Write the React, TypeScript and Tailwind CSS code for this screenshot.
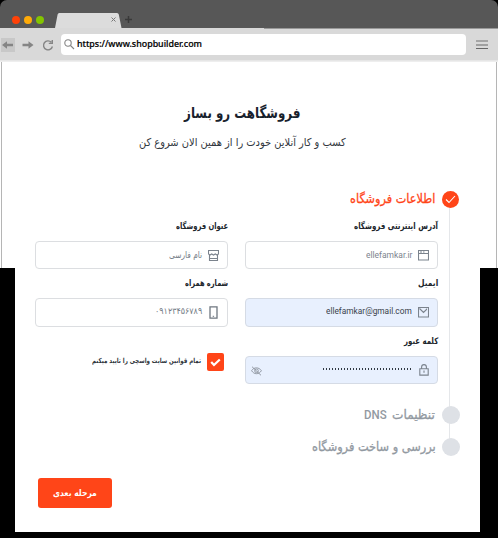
import { useLayoutEffect, useRef, useState, type ReactNode } from "react";

const fa = "font-['DejaVu_Sans',sans-serif]";
const en = "font-[Roboto,sans-serif]";

/* One line of text that is condensed or widened to a given measure. */
function Line({ width, ltr, className = "", children }: { width: number; ltr?: boolean; className?: string; children: string }) {
  const ref = useRef<HTMLSpanElement>(null);
  const [scale, setScale] = useState(1);
  useLayoutEffect(() => {
    if (ref.current) setScale(width / ref.current.offsetWidth);
  }, [width, children]);
  return (
    <span dir={ltr ? "ltr" : "rtl"} className={`block shrink-0 whitespace-nowrap ${className}`} style={{ width }}>
      <span
        ref={ref}
        className={`inline-block ${ltr ? "origin-left" : "origin-right"}`}
        style={{ transform: `scaleX(${scale})` }}
      >
        {children}
      </span>
    </span>
  );
}

function Field({ icon, filled, className = "", children }: { icon: ReactNode; filled?: boolean; className?: string; children: ReactNode }) {
  return (
    <div className={`flex w-[193px] items-center rounded-[4px] border pr-2 ${filled ? "border-[#d5dbe5] bg-[#e8f0fe]" : "border-[#dcdee1] bg-white"} ${className}`}>
      <span className="ml-[6px] flex w-[11px] shrink-0 justify-center">{icon}</span>
      {children}
    </div>
  );
}

const stroke = { fill: "none", stroke: "#7b838d", strokeWidth: 1.1 };

const WindowIcon = () => (
  <svg width="11" height="11" viewBox="0 0 11 11" {...stroke}>
    <path d="M.5.500h10v9.500H.5zM.5 3.500h10M2 2h2M5 2h1.500" />
  </svg>
);
const ShopIcon = () => (
  <svg width="11" height="11" viewBox="0 0 11 11" className="shrink-0" {...stroke}>
    <path d="M.5.500h10v3.500l-1.500 1-1.700-1-1.800 1-1.800-1L2 5 .5 4zM1.500 5v5.500h8V5M1.500 8.500h8" />
  </svg>
);
const MailIcon = () => (
  <svg width="11" height="11" viewBox="0 0 11 11" className="shrink-0" {...stroke}>
    <path d="M.5.500h10v9.500H.5zM1.500 1.500l4 4 4-4" />
  </svg>
);
const PhoneIcon = () => (
  <svg width="9" height="13" viewBox="0 0 9 13" fill="none" stroke="#6f7780">
    <path d="M1 .9h7v11.200H1z" strokeWidth="1.300" />
    <path d="M3.700 10.300h1.400" />
  </svg>
);
const LockIcon = () => (
  <svg width="10" height="12" viewBox="0 0 10 12" {...stroke}>
    <path d="M.8 4.800h8.400v6.300H.8zM2.600 4.700V3a2.400 2.400 0 0 1 4.800 0v1.700M5 6.600v2.200" />
  </svg>
);
const EyeOffIcon = () => (
  <svg width="11" height="10" viewBox="0 0 11 10" fill="none" stroke="#8b929c" strokeWidth=".9">
    <path d="M.6 4.700C2.800.9 8 .9 10.400 4.700 8 8.700 3 8.700.6 4.700z" />
    <circle cx="5.500" cy="4.800" r="1.800" />
    <path d="M1 .7l9 8.600" />
  </svg>
);

function BrowserBar() {
  return (
    <header className="relative h-[62px] shrink-0">
      <div className="flex h-7 items-end rounded-t-[7px] bg-[#575757]">
        <div className="mb-1 ml-3 flex gap-1">
          <i className="size-[8px] rounded-full bg-[#ff4208]" />
          <i className="size-[8px] rounded-full bg-[#ffab08]" />
          <i className="size-[8px] rounded-full bg-[#83c400]" />
        </div>
        <svg width="90" height="15" viewBox="0 0 90 15" className="ml-[11px]">
          <path d="M0 15 2.600 1.500Q2.800 0 4.300 0H62q1.500 0 1.800 1.500L66.500 15z" fill="#dcdcdc" />
          <path d="m56.500 4.500 4 4m0-4-4 4" stroke="#777" />
          <path d="M73.500 3v7M70 6.500h7" stroke="#393939" strokeWidth="1.500" />
        </svg>
      </div>
      <div className="flex h-8 items-center bg-[#d9d9d9]">
        <div className="mt-[2px] ml-px flex h-[14px] w-[14px] items-center justify-center bg-[#c8c8c8]">
          <svg width="12" height="8" viewBox="0 0 12 8"><path d="m0 4 5-3.800v2.600h6v2.400H5v2.600z" fill="#858585" /></svg>
        </div>
        <svg width="12" height="8" viewBox="0 0 12 8" className="mt-[2px] ml-[7px]"><path d="M11.500 4 6.500.2v2.600h-6v2.400h6v2.600z" fill="#858585" /></svg>
        <svg width="12" height="12" viewBox="0 0 12 12" className="mt-[3px] ml-2" fill="none" stroke="#858585" strokeWidth="1.400">
          <path d="M9.300 2.300A4.500 4.500 0 1 0 10.400 6.500M10.300 0v3.400H6.800" />
        </svg>
        <div className="ml-[7px] flex h-[21px] w-[405px] items-center rounded bg-white pl-[3px]">
          <svg width="11" height="11" viewBox="0 0 11 11" fill="none" stroke="#858585" strokeWidth="1.100">
            <circle cx="4" cy="4" r="3.200" /><path d="m6.500 6.500 3.500 3.500" />
          </svg>
          <Line ltr width={125} className="ml-[2px] font-['Noto_Sans',sans-serif] text-[9px] leading-4 font-medium text-black [-webkit-text-stroke:0.2px_black]">https://www.shopbuilder.com</Line>
        </div>
        <div className="ml-[10px] mt-px flex w-3 flex-col gap-[2px]">
          <i className="h-[2px] bg-[#a5a5a5]" /><i className="h-[2px] bg-[#a0a0a0]" /><i className="h-px bg-[#666]" />
        </div>
      </div>
      <div className="h-px bg-[#e6e6e6]" />
      <div className="h-px bg-[#eeeeee]" />
      <div className="absolute top-7 left-[264px] right-0 h-px bg-[#999]" />
    </header>
  );
}

const labelStyle = `${fa} h-[14px] text-[9px] leading-[14px] font-bold text-[#20252b]`;

export default function App() {
  return (
    <div className="relative flex h-[538px] w-[498px] flex-col overflow-hidden bg-black">
      <div className="absolute inset-x-0 top-[13px] h-[255px] bg-white" />
      <div className="absolute top-[62px] left-px h-[206px] w-[496px] border-x border-[#b5b5b5] bg-white" />
      <BrowserBar />
      <main dir="rtl" className="relative mr-[18px] ml-[15px] flex h-[470px] w-[465px] flex-col bg-white">
        <div className="mt-[40px] flex flex-col items-end">
          <Line width={116} className={`${fa} ml-[169px] h-[22px] text-[15px] leading-[22px] font-bold text-[#18212c]`}>فروشگاهت رو بساز</Line>
          <Line width={207} className={`${fa} mt-[11px] ml-[124px] h-4 text-[11px] leading-4 text-[#30363d]`}>کسب و کار آنلاین خودت را از همین الان شروع کن</Line>
        </div>

        <section className="relative mt-[39px] h-[271px]">
          <div className="absolute top-2 right-[30px] h-[250px] w-px bg-[#e5e7ea]" />

          <div className="relative flex h-[18px] items-center pr-[21px]">
            <span className="flex size-[17px] items-center justify-center rounded-full bg-[#ff4518]">
              <svg width="11" height="9" viewBox="0 0 11 9" fill="none" stroke="white" strokeWidth="1.100"><path d="m1 4.500 3 3L10 1" /></svg>
            </span>
            <Line width={85} className={`${fa} mr-[7px] text-[13px] leading-[18px] text-[#ff4518] [-webkit-text-stroke:0.3px_#ff4518]`}>اطلاعات فروشگاه</Line>
          </div>

          <div className="flex gap-[17px] pr-[42px]">
            <div className="w-[193px]">
              <Line width={84} className={`${labelStyle} mt-[11px]`}>آدرس اینترنتی فروشگاه</Line>
              <Field icon={<WindowIcon />} className="mt-[8px] h-[28px]">
                <Line ltr width={46} className={`${en} text-[9px] leading-3 text-[#7b838d]`}>ellefamkar.ir</Line>
              </Field>
              <Line width={20} className={`${labelStyle} mt-[7px]`}>ایمیل</Line>
              <Field filled icon={<MailIcon />} className="mt-[8px] h-[29px]">
                <Line ltr width={86} className={`${en} -mt-1 text-[9px] leading-3 text-[#39414b]`}>ellefamkar@gmail.com</Line>
              </Field>
              <Line width={34} className={`${labelStyle} mt-[7px]`}>کلمه عبور</Line>
              <Field filled icon={<LockIcon />} className="mt-[8px] h-[28px]">
                <span className="-mt-[3px] h-[2px] w-[90px] bg-[radial-gradient(circle,#303943_0.8px,transparent_1.1px)] bg-[length:3px_2px]" />
                <span className="mt-[2px] mr-auto ml-[5px]"><EyeOffIcon /></span>
              </Field>
            </div>

            <div className="w-[193px]">
              <Line width={52} className={`${labelStyle} mt-[11px]`}>عنوان فروشگاه</Line>
              <Field icon={<ShopIcon />} className="mt-[8px] h-[28px]">
                <Line width={33} className={`${fa} text-[9px] leading-3 text-[#747c86]`}>نام فارسی</Line>
              </Field>
              <Line width={43} className={`${labelStyle} mt-[7px]`}>شماره همراه</Line>
              <Field icon={<PhoneIcon />} className="mt-[8px] h-[29px]">
                <Line width={47} className={`${fa} -mt-[3px] text-[9px] leading-3 text-[#747c86]`}>۰۹۱۲۳۴۵۶۷۸۹</Line>
              </Field>
              <div className="mt-[26px] flex items-center pr-1">
                <span className="flex h-[18px] w-[17px] items-center justify-center rounded-[2px] bg-[#ff4518]">
                  <svg width="11" height="9" viewBox="0 0 11 9" fill="none" stroke="white" strokeWidth="2.200"><path d="m1.200 4 2.800 3L9.800 1.500" /></svg>
                </span>
                <Line width={109} className={`${fa} -mt-[3px] mr-[6px] text-[7px] leading-3 font-bold text-[#30363d]`}>تمام قوانین سایت واسچی را تایید میکنم</Line>
              </div>
            </div>
          </div>

          <div className="relative mt-[22px] flex h-[18px] items-center pr-5">
            <span className="size-[18px] rounded-full bg-[#dee1e6]" />
            <div className={`mr-[7px] flex gap-[5px] text-[13px] leading-[18px] text-[#9299a1] ${fa}`}>
              <Line width={43} className="[-webkit-text-stroke:0.3px_#9299a1]">تنظیمات</Line>
              <Line ltr width={23} className="font-[Roboto,sans-serif] font-medium">DNS</Line>
            </div>
          </div>
          <div className="relative mt-[14px] flex h-[18px] items-center pr-5">
            <span className="size-[18px] rounded-full bg-[#dee1e6]" />
            <Line width={124} className={`${fa} mr-[6px] text-[13px] leading-[18px] text-[#9299a1] [-webkit-text-stroke:0.3px_#9299a1]`}>بررسی و ساخت فروشگاه</Line>
          </div>
        </section>

        <button className="mt-[17px] mr-auto ml-[23px] flex h-[30px] w-[74px] items-center justify-center rounded-[3px] bg-[#ff4518]">
          <Line width={44} className={`${fa} text-[9px] leading-4 font-bold text-white`}>مرحله بعدی</Line>
        </button>
      </main>
    </div>
  );
}
